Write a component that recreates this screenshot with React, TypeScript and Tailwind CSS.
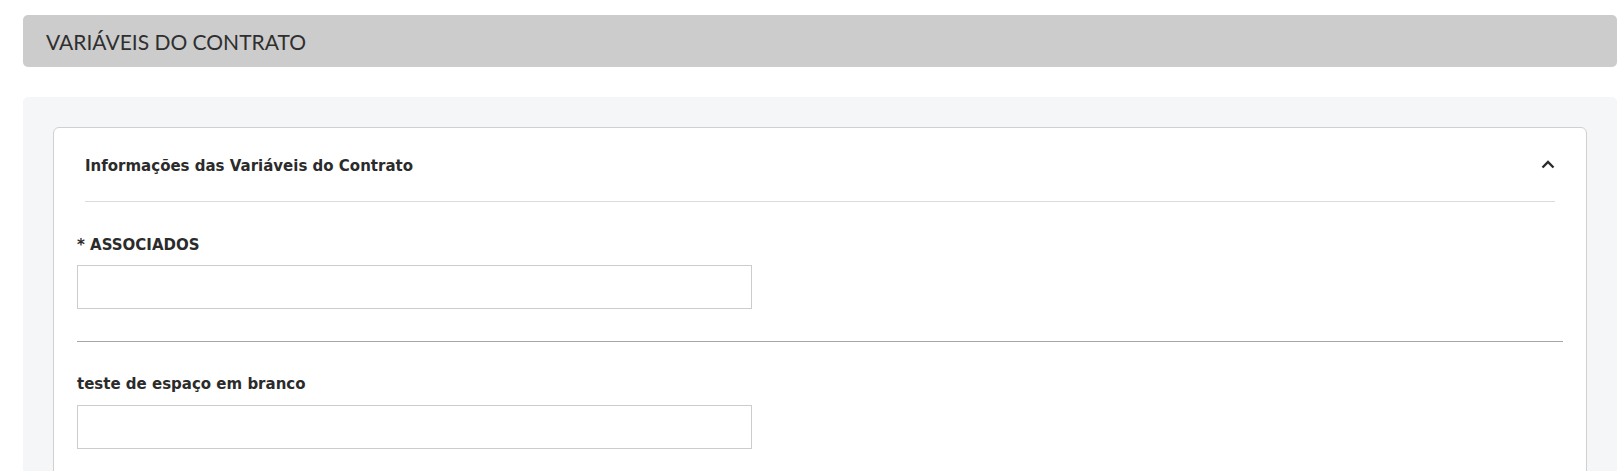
import React from "react";

function ChevronUp() {
  return (
    <svg width="14" height="9" viewBox="0 0 14 9" fill="none">
      <path d="M1.5 7.5 L7 2 L12.5 7.5" stroke="#2b2b2b" strokeWidth="2.4" strokeLinecap="butt" strokeLinejoin="miter" />
    </svg>
  );
}

export default function App() {
  const labelFont = { fontFamily: '"DejaVu Sans", Verdana, sans-serif' };
  return (
    <div className="min-h-screen bg-white pt-[15px] pl-[23px] pr-[3px]">
      <div className="h-[52px] rounded-[5px] bg-[#cccccc] flex items-center pl-[23px]">
        <span className="text-[21px] text-[#2f2f2f] font-['Lato',sans-serif] leading-none">VARIÁVEIS DO CONTRATO</span>
      </div>
      <div className="mt-[30px] rounded-t-[5px] bg-[#f5f6f8] px-[30px] pt-[30px] pb-[30px]">
        <div className="rounded-[6px] border border-[#d0d0d0] bg-white px-[23px] pt-[23px] pb-[40px]">
          <div className="mx-2 flex items-center justify-between border-b border-[#dcdcdc] pb-[20px]">
            <span className="text-[15px] font-bold leading-[30px] text-[#2b2b2b]" style={labelFont}>
              Informações das Variáveis do Contrato
            </span>
            <span className="-mt-[4px]">
              <ChevronUp />
            </span>
          </div>
          <div className="pt-[33px]">
            <div className="text-[15px] font-bold leading-[20px] text-[#2b2b2b]" style={labelFont}>
              * ASSOCIADOS
            </div>
            <div className="mt-[10px] h-[44px] w-[675px] border border-[#cccccc] bg-white" />
          </div>
          <div className="mt-[32px] h-px bg-[#a6a6a6]" />
          <div className="pt-[32px]">
            <div className="text-[15px] font-bold leading-[20px] text-[#2b2b2b]" style={labelFont}>
              teste de espaço em branco
            </div>
            <div className="mt-[11px] h-[44px] w-[675px] border border-[#cccccc] bg-white" />
          </div>
          <div className="h-[60px]" />
        </div>
      </div>
    </div>
  );
}
